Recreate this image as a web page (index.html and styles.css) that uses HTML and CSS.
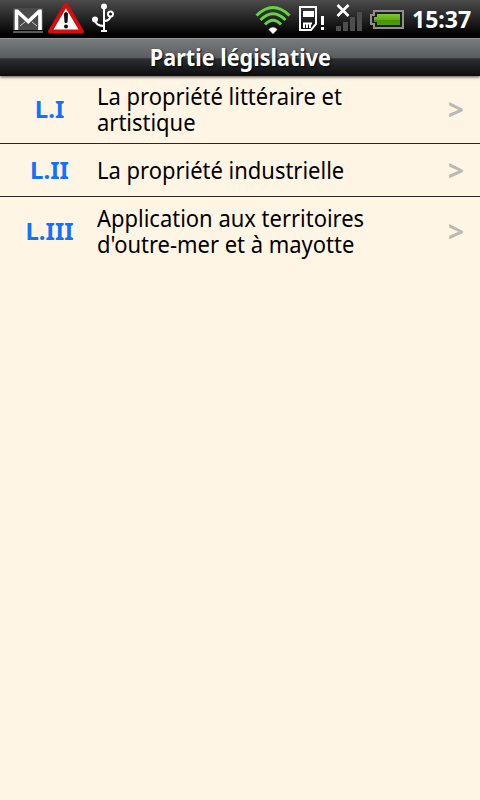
FILE: index.html
```html
<!DOCTYPE html>
<html lang="fr">
<head>
    <meta charset="utf-8">
    <title>Partie législative</title>
    <link rel="stylesheet" href="styles.css">
</head>
<body>
    <div class="status-bar">
        <svg class="icon-mail" width="32" height="38" viewBox="0 0 32 38">
            <rect x="1" y="8" width="30" height="22" fill="#4a4a4a"/>
            <path d="M4.500 30V9.500M28 30V9.500M5 11l11.300 10.500L27.500 11" fill="none" stroke="#fff" stroke-width="3.600"/>
            <path d="M8 26l5-4M25 26l-5-4" stroke="#ccc" stroke-width="1"/>
            <path d="M1 32h30" stroke="#777" stroke-width="1.5"/>
        </svg>
        <svg class="icon-alert" width="38" height="38" viewBox="0 0 38 38">
            <path d="M19 4.500L35 31.500H3Z" fill="#fff" stroke="#d90d0d" stroke-width="4" stroke-linejoin="round"/>
            <path d="M17.500 13.500q1.500-2 3 0l-.500 9h-2z" fill="#111" stroke="#111"/>
            <circle cx="19" cy="26.500" r="2" fill="#111"/>
        </svg>
        <svg class="icon-usb" width="24" height="38" viewBox="0 0 24 38">
            <g fill="none" stroke="#fff" stroke-width="2">
                <path d="M13 7v24M4 20q1 6 9 6M20 15q-1 6-7 6"/>
                <circle cx="19.500" cy="14" r="2.500" fill="#111"/>
            </g>
            <circle cx="13" cy="6.500" r="3" fill="#fff"/>
            <circle cx="4" cy="19.500" r="3" fill="#fff"/>
            <path d="M10 30h6v2h-6z" fill="#fff"/>
        </svg>
        <svg class="icon-wifi" width="38" height="38" viewBox="0 0 38 38">
            <g fill="none" stroke="#62d63c" stroke-width="3">
                <path d="M2.500 15.500Q19-.500 35.500 15.500"/>
                <path d="M6.500 20Q19 7.500 31.500 20"/>
                <path d="M11 24.500Q19 16 27 24.500"/>
            </g>
            <path d="M14.500 29.500q4.500-4.500 9 0L19 34z" fill="#fff"/>
        </svg>
        <svg class="icon-sim" width="28" height="38" viewBox="0 0 28 38">
            <path d="M2 7h16v17l-5 6H2z" fill="none" stroke="#fff" stroke-width="2"/>
            <path d="M5 11h11v6H5z" fill="#fff"/>
            <path d="M6 23v5M9 23v5M12 23v5M5 23.500h9" stroke="#fff" stroke-width="2"/>
            <path d="M24.500 16v9M24.500 27v3" stroke="#fff" stroke-width="3"/>
        </svg>
        <svg class="icon-signal" width="28" height="38" viewBox="0 0 28 38">
            <path d="M1 26h5v5H1zM8 22h5v9H8zM15 17h5v14h-5zM22 12h5v19h-5z" fill="#4d4d4d"/>
            <path d="M2.500 5l11 11M13.500 5l-11 11" stroke="#fff" stroke-width="2.600"/>
        </svg>
        <svg class="icon-battery" width="34" height="38" viewBox="0 0 34 38">
            <defs>
                <linearGradient id="charge" x1="0" y1="0" x2="0" y2="1">
                    <stop offset="0" stop-color="#7dc832"/>
                    <stop offset=".5" stop-color="#63ad15"/>
                    <stop offset=".55" stop-color="#4a9300"/>
                    <stop offset="1" stop-color="#4f9c05"/>
                </linearGradient>
            </defs>
            <path d="M4 11h29v17H4v-4H1v-9h3z" fill="#1c1c1c" stroke="#909090" stroke-width="2"/>
            <path d="M7 14h23v11H7v-3H4v-5h3z" fill="url(#charge)"/>
        </svg>
        <span class="clock">15:37</span>
    </div>

    <h1 class="title-bar"><span>Partie législative</span></h1>

    <ul class="book-list">
        <li class="book">
            <span class="book-number">L.I</span>
            <span class="book-name">La propriété littéraire et<br>artistique</span>
            <span class="arrow">&gt;</span>
        </li>
        <li class="book">
            <span class="book-number">L.II</span>
            <span class="book-name">La propriété industrielle</span>
            <span class="arrow">&gt;</span>
        </li>
        <li class="book">
            <span class="book-number">L.III</span>
            <span class="book-name">Application aux territoires<br>d'outre-mer et à mayotte</span>
            <span class="arrow">&gt;</span>
        </li>
    </ul>
</body>
</html>
```
FILE: styles.css
```css
* {
    margin: 0;
    padding: 0;
    box-sizing: border-box;
}

body {
    font-family: "Noto Sans", sans-serif;
    background-color: #fff5e4;
    min-height: 100vh;
}

.status-bar {
    height: 38px;
    display: flex;
    align-items: center;
    padding-left: 12px;
    background: linear-gradient(#4b4b4b, #232323 50%, #000 92%);
}

.status-bar svg {
    flex: none;
}

.icon-alert {
    margin-left: 3px;
}

.icon-usb {
    margin-left: 6px;
}

.icon-wifi {
    margin-left: 139px;
}

.icon-sim {
    margin-left: 6px;
}

.icon-signal {
    margin-left: 9px;
}

.icon-battery {
    margin-left: 7px;
}

.clock {
    margin-left: 8px;
    color: white;
    font-size: 24px;
    font-weight: bold;
    line-height: 38px;
    transform: scaleX(0.96);
    transform-origin: left;
}

.title-bar {
    height: 38px;
    text-align: center;
    color: white;
    font-size: 23px;
    font-weight: bold;
    line-height: 37px;
    text-shadow: 1px 1px 2px #000;
    border-top: 1px solid #8f9294;
    background: linear-gradient(#797c7e, #595c5f 52%, #2d2f32 53%, #0b0c0e);
    box-shadow: 0 1px 3px rgba(0, 0, 0, 0.7);
    position: relative;
}

.title-bar span {
    display: inline-block;
    transform: scaleX(0.94);
}

.book-list {
    list-style: none;
}

.book {
    min-height: 53px;
    display: flex;
    align-items: center;
    padding: 7px 0 8px;
    border-bottom: 1px solid #2b2722;
    font-size: 24px;
    line-height: 26px;
}

.book:first-child {
    height: 68px;
}

.book:last-child {
    height: 68px;
    border-bottom: none;
}

.book-number {
    width: 99px;
    flex: none;
    text-align: center;
    color: #1272fb;
    font-weight: bold;
}

.book-name {
    flex: 1;
    margin-left: -2px;
    color: #000;
    white-space: nowrap;
    transform: scaleX(0.915);
    transform-origin: left;
}

.arrow {
    width: 48px;
    text-align: center;
    color: #bcb8b3;
    font-size: 28px;
    font-weight: bold;
}
```
